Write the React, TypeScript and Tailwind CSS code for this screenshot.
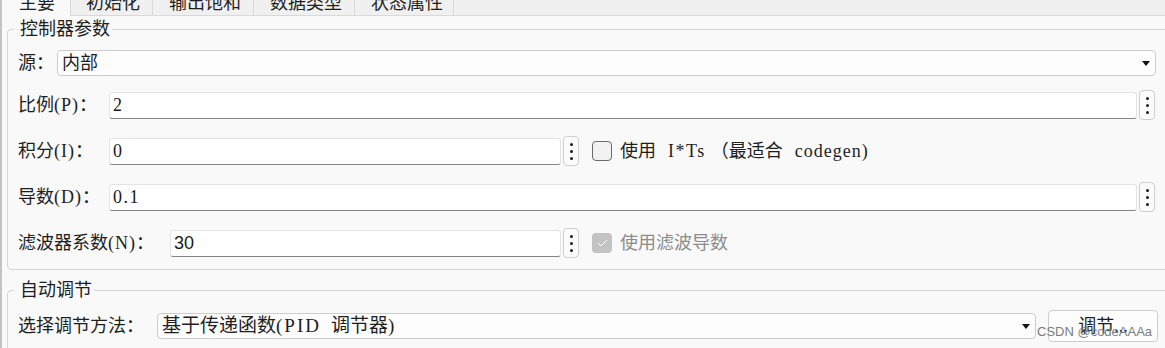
import React from "react";

const F = "font-['Liberation_Serif','Noto_Sans_CJK_SC',serif]";

function Spinner() {
  return (
    <div className="w-[16px] h-[30px] shrink-0 rounded-[4px] border border-[#cfcfcf] bg-[#fbfbfb] flex flex-col items-center justify-center gap-[4px]">
      <span className="w-[3px] h-[3px] rounded-full bg-[#1a1a1a]" />
      <span className="w-[3px] h-[3px] rounded-full bg-[#1a1a1a]" />
      <span className="w-[3px] h-[3px] rounded-full bg-[#1a1a1a]" />
    </div>
  );
}

function Arrow() {
  return (
    <svg width="8" height="5" viewBox="0 0 8 5" className="shrink-0">
      <path d="M0 0 H8 L4 5 Z" fill="#111" />
    </svg>
  );
}

function TextBox({ w, value, sans }: { w: string; value: string; sans?: boolean }) {
  return (
    <div
      className={`${w} h-[27px] shrink-0 bg-white border border-[#e4e4e4] border-b-[#858585] rounded-[3px] flex items-center pl-[3px] text-[18px] text-[#1a1a1a] ${
        sans ? "font-['Liberation_Sans',sans-serif]" : "tracking-[1.5px]"
      }`}
    >
      {value}
    </div>
  );
}

function Tab({ w, pl, label, active }: { w: string; pl: string; label: string; active?: boolean }) {
  return (
    <div
      className={`${w} ${pl} h-[16px] shrink-0 overflow-hidden border-r border-[#d9d9d9] ${
        active ? "bg-[#f9f9f9]" : "bg-[#f0f0f0] border-b"
      }`}
    >
      <div className="-mt-[6px] leading-[18px] text-[18px] text-[#1f1f1f] whitespace-nowrap">{label}</div>
    </div>
  );
}

function Label({ w, cjk, latin }: { w: string; cjk: string; latin: string }) {
  return (
    <div className={`${w} shrink-0 whitespace-nowrap`}>
      {cjk}
      <span className="tracking-[1px]">{latin}</span>：
    </div>
  );
}

export default function App() {
  return (
    <div
      className={`${F} relative w-[1165px] h-[348px] overflow-hidden bg-[#f9f9f9] border-l-2 border-[#c4c4c4] text-[#1e1e1e]`}
    >
      {/* tabs */}
      <div className="flex h-[16px]">
        <Tab w="w-[69px]" pl="pl-[17px]" label="主要" active />
        <Tab w="w-[82px]" pl="pl-[15px]" label="初始化" />
        <Tab w="w-[101px]" pl="pl-[16px]" label="输出饱和" />
        <Tab w="w-[101px]" pl="pl-[16px]" label="数据类型" />
        <Tab w="w-[99px]" pl="pl-[16px]" label="状态属性" />
        <div className="flex-1 h-[16px] bg-[#f0f0f0] border-b border-[#d9d9d9]" />
      </div>

      {/* group 1 */}
      <fieldset className="ml-[5px] mt-[3px] w-[1190px] border border-[#d6d6d6] rounded-[4px] pl-[10px] pt-[11px] pb-[11px]">
        <legend className="-ml-[4px] pl-[6px] pr-[2px] leading-[20px] text-[18px]">控制器参数</legend>

        <div className="flex items-center h-[26px] text-[18px]">
          <div className="w-[39px] shrink-0">源：</div>
          <div className="w-[1099px] h-[26px] shrink-0 rounded-[4px] border border-[#cdcdcd] bg-[#fdfdfd] flex items-center justify-between pl-[4px] pr-[5px]">
            <span>内部</span>
            <Arrow />
          </div>
        </div>

        <div className="flex items-center h-[30px] mt-[14px] text-[18px]">
          <Label w="w-[91px]" cjk="比例" latin="(P)" />
          <TextBox w="w-[1028px]" value="2" />
          <div className="ml-[2px]">
            <Spinner />
          </div>
        </div>

        <div className="flex items-center h-[30px] mt-[16px] text-[18px]">
          <Label w="w-[91px]" cjk="积分" latin="(I)" />
          <TextBox w="w-[452px]" value="0" />
          <div className="ml-[2px]">
            <Spinner />
          </div>
          <div className="ml-[13px] w-[20px] h-[20px] shrink-0 rounded-[4px] border border-[#6a6a6a] bg-[#f2f2f2]" />
          <div className="ml-[8px] whitespace-nowrap flex items-center">
            <span>使用</span>
            <span className="ml-[12px] tracking-[1.5px]">I*Ts</span>
            <span className="ml-[5px]">（最适合</span>
            <span className="ml-[12px] tracking-[1px]">codegen)</span>
          </div>
        </div>

        <div className="flex items-center h-[30px] mt-[16px] text-[18px]">
          <Label w="w-[91px]" cjk="导数" latin="(D)" />
          <TextBox w="w-[1028px]" value="0.1" />
          <div className="ml-[2px]">
            <Spinner />
          </div>
        </div>

        <div className="flex items-center h-[30px] mt-[16px] text-[18px]">
          <Label w="w-[152px]" cjk="滤波器系数" latin="(N)" />
          <TextBox w="w-[391px]" value="30" sans />
          <div className="ml-[2px]">
            <Spinner />
          </div>
          <div className="ml-[13px] w-[20px] h-[20px] shrink-0 rounded-[4px] bg-[#c3c3c3] flex items-center justify-center">
            <svg width="11" height="8" viewBox="0 0 11 8">
              <path d="M1 4.2 L4 7 L10 1" fill="none" stroke="#fff" strokeWidth="1" />
            </svg>
          </div>
          <div className="ml-[8px] whitespace-nowrap text-[#8c8c8c]">使用滤波导数</div>
        </div>
      </fieldset>

      {/* group 2 */}
      <fieldset className="ml-[5px] mt-[10px] w-[1190px] h-[100px] border border-[#d6d6d6] rounded-[4px] pl-[10px] pt-[10px]">
        <legend className="-ml-[4px] pl-[6px] pr-[2px] leading-[20px] text-[18px]">自动调节</legend>
        <div className="flex items-center h-[32px] text-[18px]">
          <div className="w-[139px] shrink-0 whitespace-nowrap">选择调节方法：</div>
          <div className="w-[879px] h-[26px] shrink-0 rounded-[4px] border border-[#cdcdcd] bg-[#fdfdfd] flex items-center justify-between pl-[4px] pr-[5px] text-[19px]">
            <span className="whitespace-nowrap">
              基于传递函数<span className="tracking-[2px]">(PID</span>
              <span className="ml-[10px]">调节器</span>)
            </span>
            <Arrow />
          </div>
          <div className="ml-[12px] w-[110px] h-[32px] shrink-0 rounded-[4px] border border-[#cdcdcd] bg-[#fdfdfd] flex items-center justify-center">
            调节...
          </div>
        </div>
      </fieldset>

      {/* watermark */}
      <div className="absolute left-[1035px] top-[325px] text-[13px] leading-[14px] text-[#7c7c7c] font-['Liberation_Sans',sans-serif] whitespace-nowrap">
        CSDN @codeAAAa
      </div>
    </div>
  );
}
